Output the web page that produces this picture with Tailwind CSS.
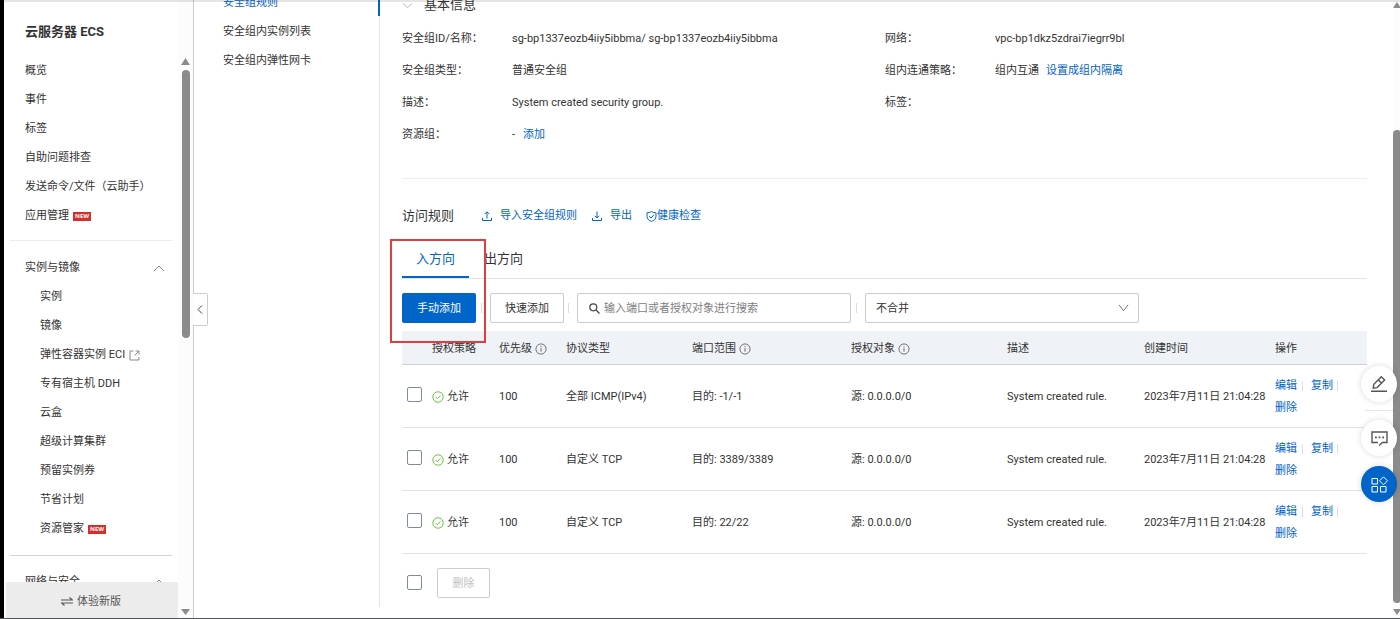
<!DOCTYPE html>
<html lang="zh-CN">
<head>
<meta charset="utf-8">
<title>云服务器 ECS</title>
<script src="https://cdn.jsdelivr.net/npm/@tailwindcss/browser@4"></script>
</head>
<body class="bg-white text-[#333] text-[11px] leading-[20px] font-['Roboto','Noto_Sans_CJK_SC',sans-serif]">
<svg class="hidden" xmlns="http://www.w3.org/2000/svg">
  <symbol id="info" viewBox="0 0 12 12"><circle cx="6" cy="6" r="5.1" fill="none" stroke="currentColor" stroke-width=".8"/><path d="M6 5.2v3.4M6 3.2v1" stroke="currentColor" stroke-width=".9"/></symbol>
  <symbol id="ok" viewBox="0 0 12 12"><circle cx="6" cy="6" r="5.2" fill="none" stroke="currentColor"/><path d="M3.7 6.1l1.7 1.7 3-3.4" fill="none" stroke="currentColor"/></symbol>
  <symbol id="up" viewBox="0 0 12 7"><path d="M1 6l5-5 5 5" fill="none" stroke="currentColor"/></symbol>
  <symbol id="down" viewBox="0 0 12 7"><path d="M1 1l5 5 5-5" fill="none" stroke="currentColor"/></symbol>
</svg>
<div class="relative flex h-screen overflow-hidden border-b border-[#55565a]">
  <div class="absolute inset-x-0 top-0 z-10 h-[2px] bg-black/10"></div>
  <div class="w-1 shrink-0 bg-black"></div>

  <aside class="relative flex w-[190px] shrink-0 border-r border-[#ccc]">
    <div class="relative flex min-w-0 flex-1 flex-col overflow-hidden pl-[6px]">
      <h1 class="mt-[22px] mb-[19px] pl-[15px] text-[13px] leading-[20px] font-bold">云服务器 ECS</h1>
      <nav class="flex flex-col gap-[9px]">
        <a href="#" class="pl-[15px]">概览</a>
        <a href="#" class="pl-[15px]">事件</a>
        <a href="#" class="pl-[15px]">标签</a>
        <a href="#" class="pl-[15px]">自助问题排查</a>
        <a href="#" class="pl-[15px]">发送命令/文件（云助手）</a>
        <a href="#" class="flex items-center gap-1 pl-[15px]">应用管理<span class="flex h-[9px] items-center bg-[#d62f2a] px-[2px] font-['Open_Sans',sans-serif] text-[6px] font-bold text-white">NEW</span></a>
      </nav>
      <hr class="mt-[14px] mb-[17px] w-[162px] border-[#ececec]">
      <nav class="flex flex-col gap-[9px]">
        <button class="flex items-center justify-between pr-[13px] pl-[15px] text-left">实例与镜像<svg class="h-[7px] w-3 text-[#888]"><use href="#up"/></svg></button>
        <a href="#" class="pl-[30px]">实例</a>
        <a href="#" class="pl-[30px]">镜像</a>
        <a href="#" class="flex items-center gap-1 pl-[30px]">弹性容器实例 ECI<svg class="size-[11px] text-[#888]" viewBox="0 0 11 11" fill="none" stroke="currentColor"><path d="M4.500 1H1v9h9V7M6.500 1H10v3.500M10 1L5.500 5.500"/></svg></a>
        <a href="#" class="pl-[30px]">专有宿主机 DDH</a>
        <a href="#" class="pl-[30px]">云盒</a>
        <a href="#" class="pl-[30px]">超级计算集群</a>
        <a href="#" class="pl-[30px]">预留实例券</a>
        <a href="#" class="pl-[30px]">节省计划</a>
        <a href="#" class="flex items-center gap-1 pl-[30px]">资源管家<span class="flex h-[9px] items-center bg-[#d62f2a] px-[2px] font-['Open_Sans',sans-serif] text-[6px] font-bold text-white">NEW</span></a>
      </nav>
      <hr class="mt-[16px] mb-[16px] w-[162px] border-[#d4d4d4]">
      <button class="flex items-center justify-between pr-[13px] pl-[15px] text-left">网络与安全<svg class="h-[7px] w-3 text-[#888]"><use href="#up"/></svg></button>
      <button class="absolute right-0 bottom-0 left-[2px] flex h-[36px] items-center justify-center gap-1 bg-[#ececec] pt-[3px] pr-[2px] text-[#555]"><svg class="h-[9px] w-3" viewBox="0 0 12 9" fill="none" stroke="currentColor" stroke-width="1.200"><path d="M0 3h11.500L8.500.5M12 6H.5l3 2.500"/></svg>体验新版</button>
    </div>
    <div class="flex w-[15px] flex-col items-center bg-[#fcfcfc] pt-[58px] pb-[3px]">
      <svg class="h-[7px] w-[9px]" viewBox="0 0 9 7"><path d="M4.500 0L9 7H0z" fill="#8b8b8b"/></svg>
      <div class="mt-[5px] h-[268px] w-2 rounded-full bg-[#8b8b8b]"></div>
      <svg class="mt-auto h-[6px] w-[9px]" viewBox="0 0 9 6"><path d="M4.500 6L9 0H0z" fill="#8b8b8b"/></svg>
    </div>
    <button aria-label="收起" class="absolute top-[293px] left-full flex h-[33px] w-[15px] items-center justify-center rounded-r-[2px] border border-l-0 border-[#ccc] bg-white text-[#444]"><svg class="h-[9px] w-[6px]" viewBox="0 0 6 9" fill="none" stroke="currentColor"><path d="M5 .5L1 4.500l4 4"/></svg></button>
  </aside>

  <nav class="relative mb-[11px] flex w-[186px] shrink-0 flex-col gap-[9px] border-r border-[#e3e3e3] pl-[29px]">
    <a href="#" class="-mt-[7px] text-[#0064c8]">安全组规则</a>
    <a href="#">安全组内实例列表</a>
    <a href="#">安全组内弹性网卡</a>
    <span class="absolute top-0 -right-px h-4 w-[2px] bg-[#0064c8]"></span>
  </nav>

  <main class="min-w-0 flex-1 pr-[26px] pl-[22px]">
    <h2 class="-mt-[5px] flex items-center gap-[11px] text-[13px] leading-[20px]"><svg class="h-[7px] w-[11px] text-[#aaa]" viewBox="0 0 12 7"><use href="#down"/></svg>基本信息</h2>
    <div class="mt-[14px] flex">
      <dl class="grid w-[483px] grid-cols-[110px_1fr] gap-y-[12px]">
        <dt>安全组ID/名称：</dt><dd>sg-bp1337eozb4iiy5ibbma/ sg-bp1337eozb4iiy5ibbma</dd>
        <dt>安全组类型：</dt><dd>普通安全组</dd>
        <dt>描述：</dt><dd>System created security group.</dd>
        <dt>资源组：</dt><dd class="flex gap-2">-<a href="#" class="text-[#0064c8]">添加</a></dd>
      </dl>
      <dl class="grid flex-1 grid-cols-[110px_1fr] content-start gap-y-[12px]">
        <dt>网络：</dt><dd>vpc-bp1dkz5zdrai7iegrr9bl</dd>
        <dt>组内连通策略：</dt><dd class="flex gap-[7px]">组内互通<a href="#" class="text-[#0064c8]">设置成组内隔离</a></dd>
        <dt>标签：</dt><dd></dd>
      </dl>
    </div>
    <hr class="mt-[33px] border-[#eee]">
    <div class="mt-[27px] flex items-center text-[#0064c8]">
      <h2 class="mr-[28px] text-[13px] leading-[20px] text-[#333]">访问规则</h2>
      <a href="#" class="mr-[15px] flex items-center gap-2"><svg class="size-[10px]" viewBox="0 0 10 10" fill="none" stroke="currentColor"><path d="M.5 7v2.500h9V7M5 7.500V1M2.800 3L5 .8 7.200 3"/></svg>导入安全组规则</a>
      <a href="#" class="mr-[14px] flex items-center gap-2"><svg class="size-[10px]" viewBox="0 0 10 10" fill="none" stroke="currentColor"><path d="M.5 7v2.500h9V7M5 .5V7M2.800 4.800L5 7l2.200-2.200"/></svg>导出</a>
      <a href="#" class="flex items-center"><svg class="size-[11px]" viewBox="0 0 11 11" fill="none" stroke="currentColor"><path d="M5.500.6c1.500.9 3 1.100 4.500 1.200v3.400c0 2.600-1.800 4.300-4.500 5.200C2.800 9.500 1 7.800 1 5.200V1.800C2.500 1.700 4 1.500 5.500.6zM3.200 5.200l1.800 1.800 3-3.200"/></svg>健康检查</a>
    </div>
    <div class="relative mt-[21px] flex border-b border-[#e3e3e3] text-[13px] leading-[20px]" role="tablist">
      <button role="tab" aria-selected="true" class="border-b-2 border-[#0064c8] px-[14px] pt-[2px] pb-[7px] text-[#0064c8]">入方向</button>
      <button role="tab" aria-selected="false" class="px-[15px] pt-[2px] pb-[9px]">出方向</button>
      <span class="pointer-events-none absolute top-[-8px] left-[-12px] h-[104px] w-[96px] border-2 border-[#e43c3c]"></span>
    </div>
    <div class="mt-[14px] flex items-center">
      <button class="h-[30px] w-[74px] rounded-[2px] bg-[#0064c8] pt-[2px] text-white">手动添加</button>
      <span class="mr-2 ml-[5px] h-[10px] w-px bg-[#ddd]"></span>
      <button class="h-[30px] w-[74px] rounded-[2px] border border-[#ccc] pt-[2px]">快速添加</button>
      <span class="mr-2 ml-1 h-[10px] w-px bg-[#ddd]"></span>
      <label class="flex h-[30px] w-[274px] items-center gap-1 rounded-[2px] border border-[#ccc] px-[11px]">
        <svg class="size-[11px] shrink-0" viewBox="0 0 11 11" fill="none" stroke="#444" stroke-width="1.200"><circle cx="4.300" cy="4.300" r="3.500"/><path d="M7 7l3.500 3.500"/></svg>
        <input type="text" aria-label="搜索" placeholder="输入端口或者授权对象进行搜索" class="min-w-0 flex-1 pt-[2px] outline-none placeholder:text-[#808080]">
      </label>
      <span class="mr-2 ml-[5px] h-[10px] w-px bg-[#ddd]"></span>
      <div class="relative">
        <select aria-label="合并方式" class="h-[30px] w-[274px] appearance-none rounded-[2px] border border-[#ccc] bg-white px-[10px] pt-[2px]"><option>不合并</option></select>
        <svg class="pointer-events-none absolute top-[11px] right-[10px] h-[8px] w-[11px] text-[#777]" viewBox="0 0 11 8" fill="none" stroke="currentColor"><path d="M1 .8l4.500 6L10 .8"/></svg>
      </div>
    </div>

    <table class="mt-2 w-full table-fixed border-collapse text-left">
      <colgroup><col class="w-[30px]"><col class="w-[67px]"><col class="w-[67px]"><col class="w-[126px]"><col class="w-[159px]"><col class="w-[156px]"><col class="w-[137px]"><col class="w-[131px]"><col class="w-[92px]"></colgroup>
      <thead>
        <tr class="h-[33px] border-b border-[#ccd0d4] bg-[#eff2f6] *:pt-[3px] *:font-normal">
          <th></th><th>授权策略</th>
          <th><span class="flex items-center gap-[3px]">优先级<svg class="size-[12px] text-[#555]"><use href="#info"/></svg></span></th>
          <th>协议类型</th>
          <th><span class="flex items-center gap-[3px]">端口范围<svg class="size-[12px] text-[#555]"><use href="#info"/></svg></span></th>
          <th><span class="flex items-center gap-[3px]">授权对象<svg class="size-[12px] text-[#555]"><use href="#info"/></svg></span></th>
          <th>描述</th><th>创建时间</th><th>操作</th>
        </tr>
      </thead>
      <tbody>
        <tr class="h-[63px] border-b border-[#e3e3e3] *:pt-[3px]">
          <td class="pb-[5px] pl-[5px]"><input type="checkbox" aria-label="选择规则 1" class="block size-[15px] appearance-none rounded-[2px] border border-[#7d8ba6]"></td>
          <td><span class="flex items-center gap-[3px]"><svg class="size-[12px] text-[#6cc644]"><use href="#ok"/></svg>允许</span></td>
          <td>100</td><td>全部 ICMP(IPv4)</td><td>目的: -1/-1</td><td>源: 0.0.0.0/0</td><td>System created rule.</td><td class="whitespace-nowrap">2023年7月11日 21:04:28</td>
          <td class="leading-[22px] text-[#0064c8]"><div class="flex items-center"><a href="#">编辑</a><span class="mr-2 ml-[5px] h-[10px] w-px bg-[#ddd]"></span><a href="#">复制</a><span class="ml-1 h-[10px] w-px bg-[#ddd]"></span></div><a href="#">删除</a></td>
        </tr>
        <tr class="h-[63px] border-b border-[#e3e3e3] *:pt-[3px]">
          <td class="pb-[5px] pl-[5px]"><input type="checkbox" aria-label="选择规则 2" class="block size-[15px] appearance-none rounded-[2px] border border-[#7d8ba6]"></td>
          <td><span class="flex items-center gap-[3px]"><svg class="size-[12px] text-[#6cc644]"><use href="#ok"/></svg>允许</span></td>
          <td>100</td><td>自定义 TCP</td><td>目的: 3389/3389</td><td>源: 0.0.0.0/0</td><td>System created rule.</td><td class="whitespace-nowrap">2023年7月11日 21:04:28</td>
          <td class="leading-[22px] text-[#0064c8]"><div class="flex items-center"><a href="#">编辑</a><span class="mr-2 ml-[5px] h-[10px] w-px bg-[#ddd]"></span><a href="#">复制</a><span class="ml-1 h-[10px] w-px bg-[#ddd]"></span></div><a href="#">删除</a></td>
        </tr>
        <tr class="h-[63px] border-b border-[#e3e3e3] *:pt-[3px]">
          <td class="pb-[5px] pl-[5px]"><input type="checkbox" aria-label="选择规则 3" class="block size-[15px] appearance-none rounded-[2px] border border-[#7d8ba6]"></td>
          <td><span class="flex items-center gap-[3px]"><svg class="size-[12px] text-[#6cc644]"><use href="#ok"/></svg>允许</span></td>
          <td>100</td><td>自定义 TCP</td><td>目的: 22/22</td><td>源: 0.0.0.0/0</td><td>System created rule.</td><td class="whitespace-nowrap">2023年7月11日 21:04:28</td>
          <td class="leading-[22px] text-[#0064c8]"><div class="flex items-center"><a href="#">编辑</a><span class="mr-2 ml-[5px] h-[10px] w-px bg-[#ddd]"></span><a href="#">复制</a><span class="ml-1 h-[10px] w-px bg-[#ddd]"></span></div><a href="#">删除</a></td>
        </tr>
      </tbody>
    </table>
    <div class="mt-[14px] flex items-center gap-[15px] pl-[5px]">
      <input type="checkbox" aria-label="全选" class="size-[15px] appearance-none rounded-[2px] border border-[#7d8ba6]">
      <button disabled class="h-[30px] w-[53px] rounded-[2px] border border-[#ccc] pt-[2px] text-[#c1c1c1]">删除</button>
    </div>
  </main>

  <div class="flex w-[7px] shrink-0 flex-col items-center overflow-hidden bg-[#fcfcfc] pt-[2px] pb-[3px]">
    <svg class="h-[6px] w-[7px]" viewBox="0 0 7 6"><path d="M4 0l4 6H0z" fill="#8b8b8b"/></svg>
    <div class="mt-[122px] w-full flex-1 rounded-l-[4px] rounded-r-[2px] bg-[#8b8b8b]"></div>
    <svg class="mt-[6px] h-[6px] w-[7px]" viewBox="0 0 7 6"><path d="M4 6l4-6H0z" fill="#8b8b8b"/></svg>
  </div>

  <div class="absolute top-[366px] right-[3px] flex flex-col items-center text-[#555]">
    <button aria-label="编辑反馈" class="flex size-9 items-center justify-center rounded-full bg-white shadow-[0_0_6px_rgba(0,0,0,0.15)]"><svg class="size-[18px]" viewBox="0 0 18 18" fill="none" stroke="currentColor" stroke-width="1.400"><path d="M1 16.300h16M3.200 13.200l.6-3.900L11.300 1.800l3.300 3.200-7.500 7.600zM8.300 4.900l3.200 3.200"/></svg></button>
    <span class="mt-2 mb-[9px] h-px w-[28px] bg-[#e5e5e5]"></span>
    <button aria-label="咨询" class="flex size-9 items-center justify-center rounded-full bg-white shadow-[0_0_6px_rgba(0,0,0,0.15)]"><svg class="size-[17px]" viewBox="0 0 17 17" fill="none" stroke="currentColor" stroke-width="1.400"><path d="M7 12.500H1V2h15v10.500h-4.500L8 15.500"/><path d="M4 7.300h1.800M7.600 7.300h1.800M11.200 7.300H13" stroke-width="1.800"/></svg></button>
    <button aria-label="应用" class="mt-[10px] flex size-9 items-center justify-center rounded-full bg-[#0064c8] text-white shadow-[0_0_6px_rgba(0,0,0,0.15)]"><svg class="size-[17px]" viewBox="0 0 17 17" fill="none" stroke="currentColor"><path d="M1 2.500h5.500V8H1zM1 10.500h5.500V16H1zM9.500 10.500H15V16H9.500zM12.500.8l4 4-4 4-4-4z"/></svg></button>
  </div>
</div>
</body>
</html>
